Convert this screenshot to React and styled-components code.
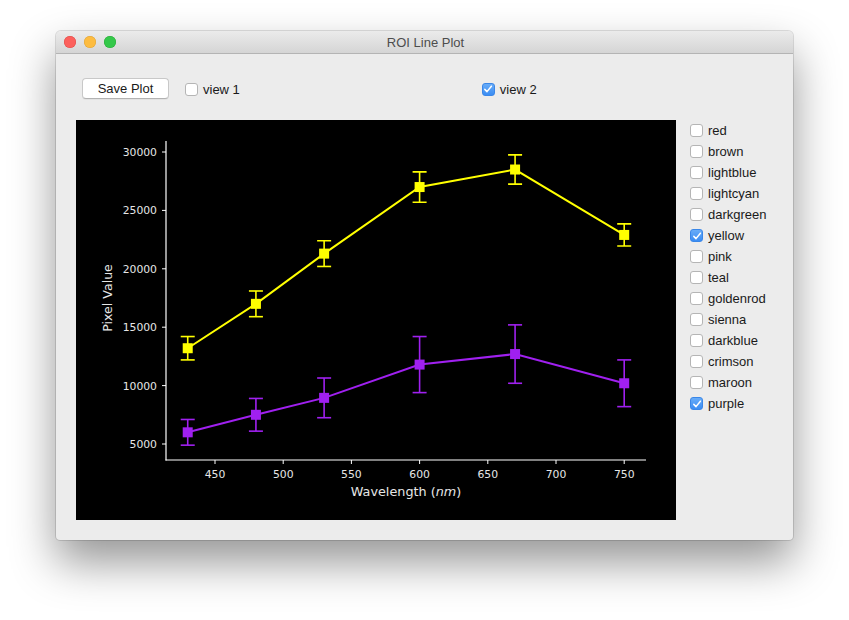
import styled, { createGlobalStyle } from "styled-components";

const GlobalStyle = createGlobalStyle`
  html, body {
    margin: 0;
    padding: 0;
    background: #ffffff;
  }
  body {
    font-family: "Liberation Sans", Arial, sans-serif;
  }
`;

const WAVES = [430, 480, 530, 600, 670, 750];

const SERIES = [
  {
    name: "yellow",
    color: "#ffff00",
    points: [
      [13200, 1000],
      [17000, 1100],
      [21300, 1100],
      [27000, 1300],
      [28500, 1250],
      [22900, 950],
    ],
  },
  {
    name: "purple",
    color: "#a020f0",
    points: [
      [6000, 1100],
      [7500, 1400],
      [8950, 1700],
      [11800, 2400],
      [12700, 2500],
      [10200, 2000],
    ],
  },
];

const COLORS = [
  "red",
  "brown",
  "lightblue",
  "lightcyan",
  "darkgreen",
  "yellow",
  "pink",
  "teal",
  "goldenrod",
  "sienna",
  "darkblue",
  "crimson",
  "maroon",
  "purple",
];
const CHECKED = ["yellow", "purple"];

const xs = (w) => 139 + (w - 450) * 1.364;
const ys = (v) => 324 - (v - 5000) * 0.01168;

const CheckBox = ({ checked, label }) => (
  <CheckRow>
    <Box $checked={checked}>
      {checked && (
        <svg width="10" height="10" viewBox="0 0 10 10">
          <path d="M1.8 5.4 L4 7.6 L8.4 2.2" fill="none" stroke="#fff" strokeWidth="1.5" strokeLinecap="round" strokeLinejoin="round" />
        </svg>
      )}
    </Box>
    <span>{label}</span>
  </CheckRow>
);

const Chart = () => (
  <svg width="600" height="400" viewBox="0 0 600 400">
    <rect width="600" height="400" fill="#000" />
    {/* axes */}
    <line x1="90" y1="21" x2="90" y2="340.5" stroke="#fff" strokeWidth="1.2" />
    <line x1="89.5" y1="340" x2="570" y2="340" stroke="#fff" strokeWidth="1.2" />
    {[5000, 10000, 15000, 20000, 25000, 30000].map((v) => (
      <g key={v}>
        <line x1="86" y1={ys(v)} x2="90" y2={ys(v)} stroke="#fff" strokeWidth="1" />
        <text x="81" y={ys(v) + 4} textAnchor="end" fill="#e6e6e6" fontSize="10.8" fontFamily="'DejaVu Sans', sans-serif">
          {v}
        </text>
      </g>
    ))}
    {[450, 500, 550, 600, 650, 700, 750].map((w) => (
      <g key={w}>
        <line x1={xs(w)} y1="340" x2={xs(w)} y2="344" stroke="#fff" strokeWidth="1" />
        <text x={xs(w)} y="358" textAnchor="middle" fill="#e6e6e6" fontSize="10.8" fontFamily="'DejaVu Sans', sans-serif">
          {w}
        </text>
      </g>
    ))}
    <text x="330" y="376" textAnchor="middle" fill="#e6e6e6" fontSize="12.8" fontFamily="'DejaVu Sans', sans-serif">
      Wavelength (<tspan fontStyle="italic">nm</tspan>)
    </text>
    <text
      x="0"
      y="0"
      transform="translate(36 178) rotate(-90)"
      textAnchor="middle"
      fill="#e6e6e6"
      fontSize="12.6"
      fontFamily="'DejaVu Sans', sans-serif"
    >
      Pixel Value
    </text>
    {SERIES.map((s) => (
      <g key={s.name}>
        <polyline
          points={s.points.map(([v], i) => `${xs(WAVES[i])},${ys(v)}`).join(" ")}
          fill="none"
          stroke={s.color}
          strokeWidth="2"
        />
        {s.points.map(([v, e], i) => {
          const x = xs(WAVES[i]);
          const top = ys(v + e);
          const bottom = ys(v - e);
          return (
            <g key={i} stroke={s.color} strokeWidth="1.6">
              <line x1={x} y1={top} x2={x} y2={bottom} />
              <line x1={x - 7} y1={top} x2={x + 7} y2={top} />
              <line x1={x - 7} y1={bottom} x2={x + 7} y2={bottom} />
              <rect x={x - 5} y={ys(v) - 5} width="10" height="10" fill={s.color} stroke="none" />
            </g>
          );
        })}
      </g>
    ))}
  </svg>
);

const App = () => (
  <>
    <GlobalStyle />
    <Page>
      <Window>
        <TitleBar>
          <Lights>
            <Light $color="#fc605c" $border="#de4a46" />
            <Light $color="#fdbc40" $border="#dea236" />
            <Light $color="#34c84a" $border="#27aa35" />
          </Lights>
          <Title>ROI Line Plot</Title>
        </TitleBar>
        <Content>
          <Toolbar>
            <Button>Save Plot</Button>
            <CheckBox label="view 1" />
            <Spacer />
            <CheckBox label="view 2" checked />
          </Toolbar>
          <Main>
            <PlotArea>
              <Chart />
            </PlotArea>
            <ColorList>
              {COLORS.map((c) => (
                <CheckBox key={c} label={c} checked={CHECKED.includes(c)} />
              ))}
            </ColorList>
          </Main>
        </Content>
      </Window>
    </Page>
  </>
);

export default App;

const Page = styled.div`
  width: 849px;
  height: 620px;
  padding: 31px 0 0 56px;
  box-sizing: border-box;
  background: #fff;
  overflow: hidden;
`;

const Window = styled.div`
  width: 737px;
  height: 509px;
  background: #ececec;
  border-radius: 5px 5px 4px 4px;
  box-shadow: 0 0 0 1px rgba(0, 0, 0, 0.12), 0 22px 45px rgba(0, 0, 0, 0.42);
  display: flex;
  flex-direction: column;
  overflow: hidden;
`;

const TitleBar = styled.div`
  position: relative;
  height: 22px;
  flex-shrink: 0;
  background: linear-gradient(#ebebeb, #d5d5d5);
  border-bottom: 1px solid #b4b4b4;
  display: flex;
  align-items: center;
  justify-content: center;
`;

const Lights = styled.div`
  position: absolute;
  left: 8px;
  top: 5px;
  display: flex;
  gap: 8px;
`;

const Light = styled.div`
  width: 12px;
  height: 12px;
  border-radius: 50%;
  background: ${(p) => p.$color};
  box-shadow: inset 0 0 0 0.5px ${(p) => p.$border};
`;

const Title = styled.div`
  font-size: 13px;
  color: #4d4d4d;
  margin-left: 2px;
`;

const Content = styled.div`
  padding: 25px 0 0 20px;
  display: flex;
  flex-direction: column;
`;

const Toolbar = styled.div`
  display: flex;
  align-items: center;
  height: 20px;
  padding-left: 6px;
  gap: 16px;
`;

const Spacer = styled.div`
  width: 210px;
`;

const Button = styled.button`
  width: 87px;
  height: 21px;
  margin-top: -2px;
  padding: 0;
  background: #fff;
  border: 1px solid #c8c8c8;
  border-bottom-color: #b2b2b2;
  border-radius: 4px;
  font-family: "Liberation Sans", Arial, sans-serif;
  font-size: 13px;
  color: #1a1a1a;
  box-shadow: 0 1px 0 rgba(0, 0, 0, 0.04);
`;

const CheckRow = styled.label`
  display: flex;
  align-items: center;
  gap: 5px;
  font-size: 13px;
  color: #1a1a1a;
  height: 21px;
`;

const Box = styled.span`
  width: 13px;
  height: 13px;
  box-sizing: border-box;
  border-radius: 3px;
  display: flex;
  align-items: center;
  justify-content: center;
  background: ${(p) => (p.$checked ? "linear-gradient(#68acf8, #3b8df3)" : "#fff")};
  border: 1px solid ${(p) => (p.$checked ? "#3a87e8" : "#b5b5b5")};
`;

const Main = styled.div`
  display: flex;
  margin-top: 21px;
  gap: 14px;
`;

const PlotArea = styled.div`
  width: 600px;
  height: 400px;
  flex-shrink: 0;
  svg {
    display: block;
  }
`;

const ColorList = styled.div`
  display: flex;
  flex-direction: column;
`;
